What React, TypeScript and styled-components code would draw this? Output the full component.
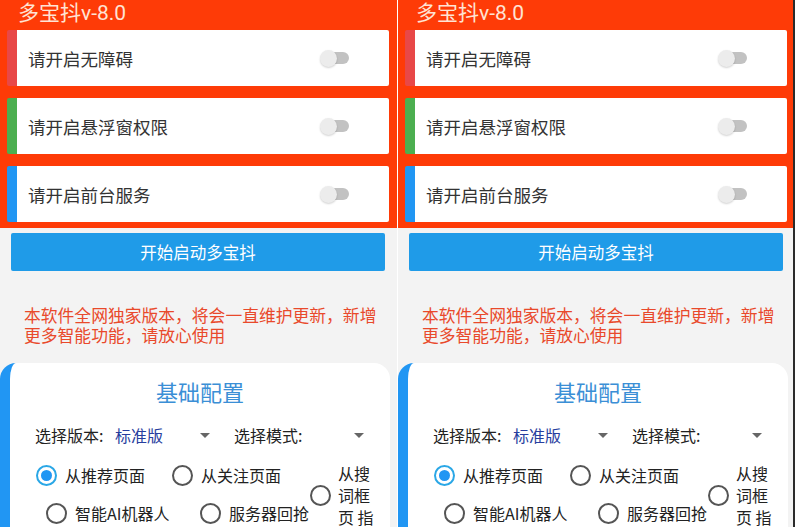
import React from "react";
import styled, { createGlobalStyle } from "styled-components";

const GlobalStyle = createGlobalStyle`
  html, body { margin: 0; padding: 0; background: #ffffff; }
  body { font-family: Roboto, "Noto Sans CJK SC", "Noto Sans", sans-serif; }
  * { box-sizing: border-box; }
`;

const Screen = styled.div`
  display: flex;
  width: 800px;
  height: 527px;
  overflow: hidden;
  background: #ffffff;
`;

const PanelClip = styled.div<{ $w: number; $border?: boolean }>`
  width: ${(p) => p.$w}px;
  flex: none;
  height: 527px;
  overflow: hidden;
  ${(p) => (p.$border ? "border-right: 2px solid #2b2b2b;" : "")}
`;

const Panel = styled.div`
  width: 397px;
  height: 527px;
  display: flex;
  flex-direction: column;
  background: #f3f3f3;
  & > * { flex-shrink: 0; }
`;

const Header = styled.div`
  background: #fe3b07;
  padding: 0 8px 6px 7px;
  display: flex;
  flex-direction: column;
  gap: 12px;
`;

const AppTitle = styled.div`
  font-family: Roboto, "Noto Sans CJK SC", sans-serif;
  font-size: 21px;
  line-height: 26px;
  color: #ffe3d4;
  padding-left: 11px;
  margin-bottom: -8px;
`;

const PermCard = styled.div<{ $stripe: string }>`
  height: 56px;
  flex: none;
  background: #ffffff;
  border-left: 10px solid ${(p) => p.$stripe};
  border-radius: 2px;
  display: flex;
  align-items: center;
  padding-left: 11px;
  padding-right: 40px;
`;

const PermText = styled.span`
  flex: 1;
  font-family: "Noto Sans CJK SC", sans-serif;
  font-size: 17.5px;
  color: #333333;
`;

const Toggle = styled.div`
  position: relative;
  width: 29px;
  height: 17px;
  flex: none;
`;

const Track = styled.div`
  position: absolute;
  left: 3px;
  top: 2.5px;
  width: 26px;
  height: 12px;
  border-radius: 6px;
  background: #c2c2c2;
`;

const Thumb = styled.div`
  position: absolute;
  left: 0;
  top: 0;
  width: 17px;
  height: 17px;
  border-radius: 50%;
  background: #ececec;
  box-shadow: 0 1px 2px rgba(0, 0, 0, 0.18);
`;

const StartButton = styled.div`
  margin: 5px 12px 0 11px;
  height: 38px;
  background: #1f9be8;
  border-radius: 2px;
  color: #ffffff;
  font-family: "Noto Sans CJK SC", sans-serif;
  font-size: 16.5px;
  display: flex;
  align-items: center;
  justify-content: center;
`;

const Notice = styled.div`
  margin: 34px 14px 0 24px;
  font-family: "Noto Sans CJK SC", sans-serif;
  font-size: 16.8px;
  line-height: 20px;
  color: #e9492b;
`;

const ConfigCard = styled.div`
  margin: 18px 7px 0 0;
  flex: 1 0 auto;
  background: #ffffff;
  border-left: 10px solid #2196f3;
  border-radius: 16px 16px 0 0;
  display: flex;
  flex-direction: column;
  padding-top: 13px;
`;

const ConfigTitle = styled.div`
  text-align: center;
  font-family: "Noto Sans CJK SC", sans-serif;
  font-size: 22px;
  line-height: 30px;
  color: #3b8fd6;
`;

const SelectRow = styled.div`
  display: flex;
  align-items: center;
  margin-top: 14px;
  height: 30px;
  padding-left: 25px;
  font-family: "Noto Sans CJK SC", sans-serif;
  font-size: 16px;
  color: #222222;
`;

const SelectLabel = styled.span<{ $w: number }>`
  width: ${(p) => p.$w}px;
  flex: none;
`;

const SelectValue = styled.span<{ $w: number }>`
  width: ${(p) => p.$w}px;
  flex: none;
  color: #283e9e;
`;

const Arrow = styled.span<{ $mr: number }>`
  width: 0;
  height: 0;
  border-left: 5px solid transparent;
  border-right: 5px solid transparent;
  border-top: 5px solid #666666;
  margin-right: ${(p) => p.$mr}px;
  flex: none;
`;

const Options = styled.div`
  display: flex;
  align-items: flex-start;
  margin-top: 2px;
  font-family: "Noto Sans CJK SC", sans-serif;
  font-size: 16px;
  color: #222222;
`;

const OptionRows = styled.div`
  display: flex;
  flex-direction: column;
  width: 300px;
  flex: none;
  padding-top: 4px;
`;

const OptionRow = styled.div<{ $indent: number }>`
  display: flex;
  align-items: center;
  height: 38px;
  padding-left: ${(p) => p.$indent}px;
`;

const Option = styled.div<{ $w: number }>`
  display: flex;
  align-items: center;
  width: ${(p) => p.$w}px;
  flex: none;
  gap: 8px;
`;

const Radio = styled.span<{ $on?: boolean }>`
  width: 21px;
  height: 21px;
  border-radius: 50%;
  flex: none;
  border: 2px solid ${(p) => (p.$on ? "#2aa7e6" : "#555555")};
  display: flex;
  align-items: center;
  justify-content: center;
  &::after {
    content: "";
    width: 11px;
    height: 11px;
    border-radius: 50%;
    background: ${(p) => (p.$on ? "#2196f3" : "transparent")};
  }
`;

const SideOption = styled.div`
  display: flex;
  align-items: center;
  gap: 7px;
  margin-top: 10px;
`;

const SideText = styled.div`
  line-height: 22px;
`;

function PanelContent() {
  const perms = [
    { text: "请开启无障碍", color: "#e84848" },
    { text: "请开启悬浮窗权限", color: "#4caf50" },
    { text: "请开启前台服务", color: "#2196f3" },
  ];
  return (
    <Panel>
      <Header>
        <AppTitle>多宝抖v-8.0</AppTitle>
        {perms.map((p) => (
          <PermCard key={p.text} $stripe={p.color}>
            <PermText>{p.text}</PermText>
            <Toggle>
              <Track />
              <Thumb />
            </Toggle>
          </PermCard>
        ))}
      </Header>
      <StartButton>开始启动多宝抖</StartButton>
      <Notice>
        本软件全网独家版本，将会一直维护更新，新增
        <br />
        更多智能功能，请放心使用
      </Notice>
      <ConfigCard>
        <ConfigTitle>基础配置</ConfigTitle>
        <SelectRow>
          <SelectLabel $w={80}>选择版本:</SelectLabel>
          <SelectValue $w={85}>标准版</SelectValue>
          <Arrow $mr={24} />
          <SelectLabel $w={120}>选择模式:</SelectLabel>
          <Arrow $mr={0} />
        </SelectRow>
        <Options>
          <OptionRows>
            <OptionRow $indent={26}>
              <Option $w={136}>
                <Radio $on />
                <span>从推荐页面</span>
              </Option>
              <Option $w={140}>
                <Radio />
                <span>从关注页面</span>
              </Option>
            </OptionRow>
            <OptionRow $indent={36}>
              <Option $w={154}>
                <Radio />
                <span>智能AI机器人</span>
              </Option>
              <Option $w={120}>
                <Radio />
                <span>服务器回抢</span>
              </Option>
            </OptionRow>
          </OptionRows>
          <SideOption>
            <Radio />
            <SideText>
              从搜
              <br />
              词框
              <br />
              页&nbsp;指
            </SideText>
          </SideOption>
        </Options>
      </ConfigCard>
    </Panel>
  );
}

export default function App() {
  return (
    <>
      <GlobalStyle />
      <Screen>
        <PanelClip $w={398}>
          <PanelContent />
        </PanelClip>
        <PanelClip $w={397} $border>
          <PanelContent />
        </PanelClip>
      </Screen>
    </>
  );
}
